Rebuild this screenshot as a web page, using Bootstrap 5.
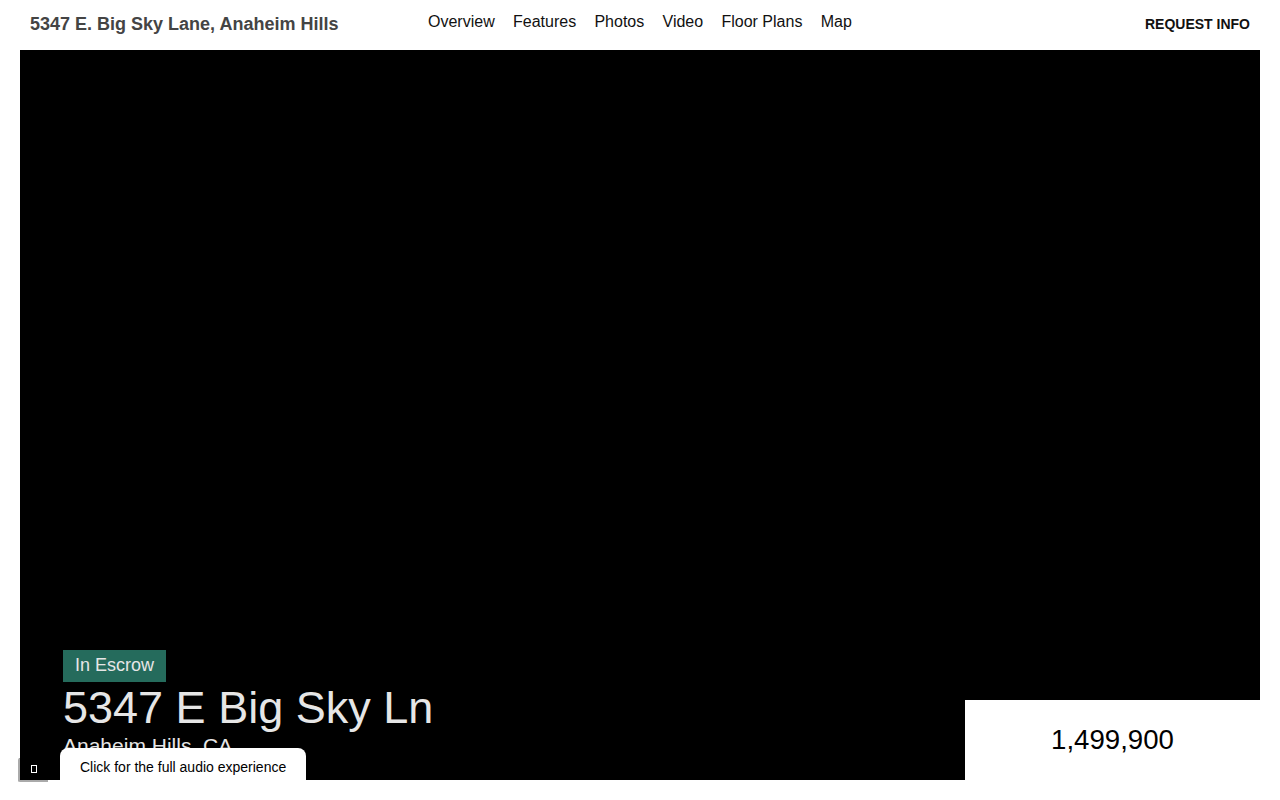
<!DOCTYPE html>
<html lang="en">
<head>
<meta charset="utf-8">
<title>5347 E. Big Sky Lane, Anaheim Hills</title>
<link href="https://cdn.jsdelivr.net/npm/bootstrap@5.3.0/dist/css/bootstrap.min.css" rel="stylesheet">
<style>
html,body{height:100%;}
body{font-family:"Liberation Sans",Arial,sans-serif;background:#fff;color:#000;overflow:hidden;}
.page-wrap{width:1240px;height:780px;margin-left:20px;display:flex;flex-direction:column;}
.top-bar{height:50px;flex:none;padding:0 10px;}
.site-title{width:398px;flex:none;font-size:18px;font-weight:700;color:#444;line-height:47px;padding-bottom:1px;}
.top-links{gap:18.3px;flex:1;padding-bottom:7px;}
.top-links a{font-size:16px;color:#111;text-decoration:none;line-height:28px;}
.req-link{font-size:14px;font-weight:700;color:#111;text-decoration:none;line-height:47px;padding-bottom:1px;}
.hero-box{flex:1;background:#000;position:relative;overflow:hidden;}
.hero-text{position:absolute;left:43px;top:600px;color:#e6e6e6;}
.status-tag{display:inline-block;height:32px;line-height:30px;padding:0 12px;background:#256b5c;font-size:18px;color:#e6e6e6;vertical-align:top;width:103px;white-space:nowrap;}
.hero-title{font-size:45px;line-height:52px;margin:0;font-weight:400;}
.hero-sub{font-size:21px;line-height:24px;margin:0;color:#e6e6e6;}
.price-box{position:absolute;right:0;bottom:0;width:295px;height:80px;background:#fff;font-size:27.6px;line-height:80px;text-align:center;color:#000;}
.audio-tab{position:absolute;left:60px;top:748px;width:246px;height:32px;background:#fff;border-radius:8px 8px 0 0;font-size:14px;line-height:38px;padding-left:20px;color:#000;}
.sound-btn{position:absolute;left:18px;top:758px;width:30px;height:24px;background:#000;border:0;border-left:2px solid #aaa;border-bottom:2px solid #aaa;border-radius:2px 0 0 2px;padding:0;display:flex;align-items:center;justify-content:center;}
.sound-btn span{display:block;width:6px;height:8px;border:1px solid #fff;}
</style>
</head>
<body>
<div class="page-wrap">
  <nav class="top-bar d-flex align-items-center">
    <div class="site-title">5347 E. Big Sky Lane, Anaheim Hills</div>
    <div class="top-links d-flex align-items-center">
      <a href="#">Overview</a><a href="#">Features</a><a href="#">Photos</a><a href="#">Video</a><a href="#">Floor Plans</a><a href="#">Map</a>
    </div>
    <a class="req-link" href="#">REQUEST INFO</a>
  </nav>
  <section class="hero-box">
    <div class="hero-text">
      <span class="status-tag">In Escrow</span>
      <h1 class="hero-title">5347 E Big Sky Ln</h1>
      <p class="hero-sub">Anaheim Hills, CA</p>
    </div>
    <div class="price-box">1,499,900</div>
  </section>
</div>
<div class="audio-tab">Click for the full audio experience</div>
<button class="sound-btn" type="button" aria-label="Sound"><span></span></button>
<script src="https://cdn.jsdelivr.net/npm/bootstrap@5.3.0/dist/js/bootstrap.bundle.min.js"></script>
</body>
</html>
